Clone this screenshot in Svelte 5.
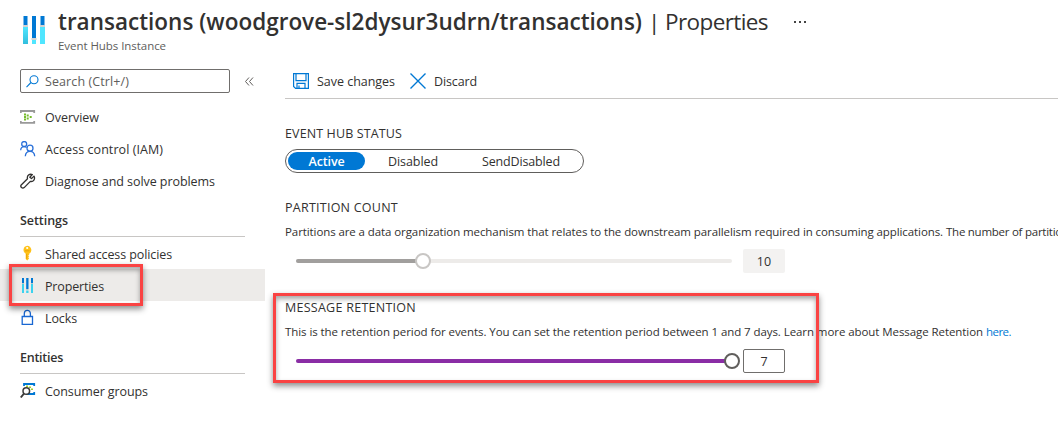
<script>
  const top = [
    { icon: 'overview', label: 'Overview', w: 54 },
    { icon: 'iam', label: 'Access control (IAM)', w: 118 },
    { icon: 'wrench', label: 'Diagnose and solve problems', w: 170 }
  ];
  const settings = [
    { icon: 'key', label: 'Shared access policies', w: 127 },
    { icon: 'bars', label: 'Properties', w: 59, active: true },
    { icon: 'lock', label: 'Locks', w: 32 }
  ];
  const entities = [{ icon: 'groups', label: 'Consumer groups', w: 103 }];

  // Spreads a label over its column width through letter spacing.
  function fit(node, width) {
    const n = node.textContent.length;
    const natural = node.getBoundingClientRect().width;
    node.style.letterSpacing = `${(width - natural) / n}px`;
  }
</script>

{#snippet bars(size)}
  <svg width={size} height={size} viewBox="0 0 28 28">
    <defs>
      <linearGradient id="cyan" x1="0" y1="0" x2="0" y2="1"><stop offset="0" stop-color="#50e6ff" /><stop offset="1" stop-color="#32bedd" /></linearGradient>
    </defs>
    <path fill="#0078d4" d="M3.500 0h4v9h-4zM12 0h4v22h-4zM20.500 0h4v9h-4z" />
    <path fill="#d2d2d2" d="M3 9h5v2H3zM11.500 22h5v2h-5zM20 9h5v2h-5z" />
    <path fill="url(#cyan)" d="M3 11h5v17H3z" />
    <path fill="#50e6ff" d="M12 24h4v4h-4zM20 11h5v17h-5z" />
  </svg>
{/snippet}

{#snippet icon(name)}
  {#if name === 'bars'}
    <svg width="16" height="16" viewBox="0 0 16 16">
      <path fill="#0078d4" d="M2 1h2v5H2zM6.200 1h2.300v11H6.200zM11 1h2v5h-2z" />
      <path fill="#b5c7cf" d="M2 6h2v1H2zM6.200 12h2.300v1H6.200zM11 6h2v1h-2z" />
      <path fill="#3bd2ee" d="M2 7h2v9H2zM6.200 13.500h2.300V16H6.200zM11 7h2v9h-2z" />
    </svg>
  {:else if name === 'overview'}
    <svg width="16" height="16" viewBox="0 0 16 16">
      <path d="M.8 4V2h13.400v2M.8 12v1.800h13.400V12" fill="none" stroke="#999" stroke-width="1.800" />
      <path fill="#76bc2d" d="M4 4.500h2v2H4zM4 7h2v2H4zM4 9.500h2v2H4zM6.700 5.500h2v2h-2zM6.700 8.500h2v2h-2zM9.700 7h2v2h-2z" />
    </svg>
  {:else if name === 'iam'}
    <svg width="16" height="16" viewBox="0 0 16 16" fill="none" stroke="#2b71d9" stroke-width="1.300">
      <circle cx="4.200" cy="3" r="2.500" /><path d="M.7 9.300C.7 7.200 2 5.700 4.200 5.700c1 0 1.800.3 2.400.8" />
      <circle cx="10" cy="7.200" r="3" /><path d="M5.300 15.300c.2-3 2-4.900 4.700-4.900s4.500 1.900 4.700 4.900" />
    </svg>
  {:else if name === 'wrench'}
    <svg width="16" height="16" viewBox="0 0 16 16" fill="none" stroke="#323130" stroke-width="1.300" stroke-linejoin="round">
      <path d="M14 3.100l-2.500 2.500-1.700-1.400 2.500-2.700c-2.900-1-5.600 1.200-4.800 4.200L1.200 12c-1.300 1.800 1.200 4.200 3 2.600l6.100-6.200c3.200.6 5.200-2.500 3.700-5.300z" />
    </svg>
  {:else if name === 'key'}
    <svg width="16" height="16" viewBox="0 0 16 16">
      <path fill="#ffc21a" d="M7.200.8a4.300 4.300 0 0 1 2 8v1l-1 .9 1 1-1 1 1 .9-2 2-1.500-1.500V8.800a4.300 4.300 0 0 1 1.500-8z" />
      <circle cx="7.200" cy="3" r="1.100" fill="#fff" /><path d="M5 5.800h4.500M6.700 8.800v5" stroke="#e59a00" stroke-width=".8" />
    </svg>
  {:else if name === 'lock'}
    <svg width="16" height="16" viewBox="0 0 16 16" fill="none" stroke="#1967d2" stroke-width="1.300">
      <path d="M2.200 7.500h10.300v7.800H2.200zM4.300 7.500V4.800c0-4.700 6.100-4.700 6.100 0v2.700" />
    </svg>
  {:else}
    <svg width="16" height="16" viewBox="0 0 16 16">
      <path d="M4 3V1h10.200v2M7 11h7.200V9" fill="none" stroke="#0078d4" stroke-width="1.800" />
      <path fill="#a4cf2c" d="M6 2.500h2V4H6zM9 3.500h2V5H9zM11 5.500h2V7h-2z" />
      <circle cx="6.300" cy="8" r="3.300" fill="#fff" fill-opacity=".7" stroke="#3b3a39" stroke-width="1.500" /><path d="M4 10.500L.8 14.500" stroke="#3b3a39" stroke-width="2" />
    </svg>
  {/if}
{/snippet}

{#snippet items(list)}
  {#each list as item}
    <div class="item" class:active={item.active}>
      {@render icon(item.icon)}
      <span use:fit={item.w}>{item.label}</span>
    </div>
  {/each}
{/snippet}

<div class="page">
  <header>
    <div class="logo">{@render bars(28)}</div>
    <div class="heading">
      <div class="title">
        <b use:fit={584}>transactions (woodgrove-sl2dysur3udrn/transactions)</b><span class="rest" use:fit={120}>| Properties</span><i class="dots"></i>
      </div>
      <div class="sub"><span use:fit={108}>Event Hubs Instance</span></div>
    </div>
  </header>

  <div class="body">
    <nav>
      <div class="searchrow">
        <div class="search">
          <svg width="13" height="13" viewBox="0 0 13 13" fill="none" stroke="#0078d4" stroke-width="1.100"><circle cx="8" cy="4.700" r="4" /><path d="M5 7.500L.5 12.200" /></svg>
          <span use:fit={84}>Search (Ctrl+/)</span>
        </div>
        <svg class="collapse" width="9" height="9" viewBox="0 0 9 9" fill="none" stroke="#605e5c"><path d="M4 .5l-3.500 4 3.500 4M8 .5l-3.500 4 3.500 4" /></svg>
      </div>
      <div class="group first">{@render items(top)}</div>
      <h3 class="settings"><span use:fit={48}>Settings</span></h3>
      <div class="group second">{@render items(settings)}</div>
      <h3 class="entities"><span use:fit={43}>Entities</span></h3>
      <div class="group third">{@render items(entities)}</div>
    </nav>

    <main>
      <div class="toolbar">
        <svg width="16" height="16" viewBox="0 0 16 16" fill="none" stroke="#0078d4" stroke-width="1.200"><path d="M.6.6h14.800v14.800H2.600l-2-2zM3 .6v7h10v-7M4 15.400v-5h8v5M6 12.500v3" /></svg>
        <span class="save" use:fit={78}>Save changes</span>
        <svg width="16" height="16" viewBox="0 0 16 16" stroke="#0078d4" stroke-width="1.400"><path d="M.5.5l15 15M15.500.5l-15 15" /></svg>
        <span use:fit={43}>Discard</span>
      </div>

      <section class="status">
        <h2><span use:fit={117}>EVENT HUB STATUS</span></h2>
        <div class="pills">
          <div class="pill on"><span use:fit={36}>Active</span></div>
          <div class="pill mid"><span use:fit={50}>Disabled</span></div>
          <div class="pill last"><span use:fit={78}>SendDisabled</span></div>
        </div>
      </section>

      <section class="partition">
        <h2><span use:fit={113}>PARTITION COUNT</span></h2>
        <p><span use:fit={658}>Partitions are a data organization mechanism that relates to the downstream parallelism required in consuming applications.</span><span class="more" use:fit={128}>The number of partitions</span></p>
        <div class="slider">
          <div class="track"><div class="fill" style="width: 29.2%"></div><div class="knob" style="left: 29.2%"></div></div>
          <div class="value">10</div>
        </div>
      </section>

      <section class="retention">
        <h2><span use:fit={131}>MESSAGE RETENTION</span></h2>
        <p><span use:fit={698}>This is the retention period for events. You can set the retention period between 1 and 7 days. Learn more about Message Retention</span><a href="#top" use:fit={25}>here.</a></p>
        <div class="slider live">
          <div class="track"><div class="fill" style="width: 100%"></div><div class="knob" style="left: 100%"></div></div>
          <div class="value">7</div>
        </div>
      </section>
    </main>
  </div>
  <div class="mark small"></div>
  <div class="mark large"></div>
</div>

<style>
  :global(body) { background: #fff; overflow: hidden; }
  .page { position: relative; width: 1058px; height: 425px; overflow: hidden; font: 12.500px/18px "Open Sans", "Noto Sans", sans-serif; color: #323130; white-space: nowrap; }
  svg { display: block; flex: none; }
  span, b, a { display: inline-block; flex: none; }
  header { display: flex; height: 66px; }
  .logo { width: 58px; padding: 16px 0 0 20px; box-sizing: border-box; }
  .heading { padding-top: 6px; }
  .title { display: flex; height: 31px; align-items: center; font-size: 22.500px; line-height: 30px; }
  b { font-weight: 600; }
  .rest { margin-left: 6px; }
  .dots { width: 2px; height: 2px; margin: 0 0 0 26px; background: #444; box-shadow: 5px 0 #444, 10px 0 #444; }
  .sub { font-size: 11.500px; color: #605e5c; line-height: 18px; }
  .body { display: flex; }
  nav { width: 265px; flex: none; }
  .searchrow { display: flex; align-items: center; gap: 15px; padding: 3px 0 0 20px; }
  .search { display: flex; align-items: center; gap: 6px; width: 210px; height: 24px; box-sizing: border-box; border: 1px solid #706e6c; border-radius: 2px; padding-left: 5px; color: #605e5c; }
  .search span { padding-top: 2px; }
  .first { padding-top: 8px; }
  .third { padding-top: 1px; }
  .item { display: flex; align-items: center; gap: 9px; height: 32px; padding-left: 20px; box-sizing: border-box; }
  .item span { padding-top: 2px; }
  .second .item span { padding-top: 4px; }
  .active { background: #edebe9; }
  h3 { margin: 0 20px; padding-top: 14px; box-sizing: border-box; border-bottom: 1px solid #c8c6c4; font-size: 12.500px; font-weight: 600; line-height: 20px; }
  .settings { height: 40px; }
  .entities { height: 41px; padding-top: 15px; }
  main { flex: 1; padding-left: 20px; min-width: 0; }
  .toolbar { display: flex; align-items: center; height: 33px; padding: 0 0 3px 8px; box-sizing: border-box; border-bottom: 1px solid #c8c6c4; }
  .toolbar span { margin-left: 8px; padding-top: 2px; }
  .toolbar .save { margin-right: 15px; }
  h2 { margin: 0; font-size: 12.500px; font-weight: 400; line-height: 18px; }
  .status { padding-top: 26px; }
  .pills { display: flex; align-items: center; width: 299px; height: 24px; margin-top: 6px; box-sizing: border-box; border: 1px solid #605e5c; border-radius: 12px; padding: 0 2px; }
  .pill { display: flex; justify-content: center; height: 18px; border-radius: 9px; line-height: 20px; }
  .on { width: 77px; background: #0078d4; color: #fff; font-weight: 600; }
  .mid { width: 96px; }
  .last { width: 120px; }
  .partition { padding-top: 26px; }
  p { display: flex; margin: 6px 0 0; font-size: 11.500px; line-height: 18px; }
  .more { margin-left: 3px; }
  a { color: #0078d4; text-decoration: none; margin-left: 3px; }
  .slider { display: flex; align-items: center; gap: 11px; height: 24px; margin: 8px 0 0 11px; }
  .track { position: relative; width: 436px; height: 4px; border-radius: 2px; background: #edebe9; }
  .fill { height: 4px; border-radius: 2px; background: #a19f9d; }
  .knob { position: absolute; top: -6px; width: 12px; height: 12px; margin-left: -8px; border: 2px solid #c8c6c4; border-radius: 50%; background: #fff; }
  .value { width: 42px; height: 24px; box-sizing: border-box; background: #f3f2f1; border-radius: 2px; text-align: center; line-height: 25px; }
  .retention { padding-top: 26px; }
  .live .fill { background: #8a2da5; }
  .live .knob { border-color: #605e5c; }
  .live .value { background: #fff; border: 1px solid #706e6c; line-height: 23px; }
  .mark { position: absolute; box-sizing: border-box; border: 3px solid #fa4343; box-shadow: 0 3px 6px rgba(0, 0, 0, .45), inset 0 3px 5px rgba(0, 0, 0, .35); }
  .small { left: 9px; top: 264px; width: 134px; height: 42px; }
  .large { left: 273px; top: 293px; width: 546px; height: 90px; }
</style>
